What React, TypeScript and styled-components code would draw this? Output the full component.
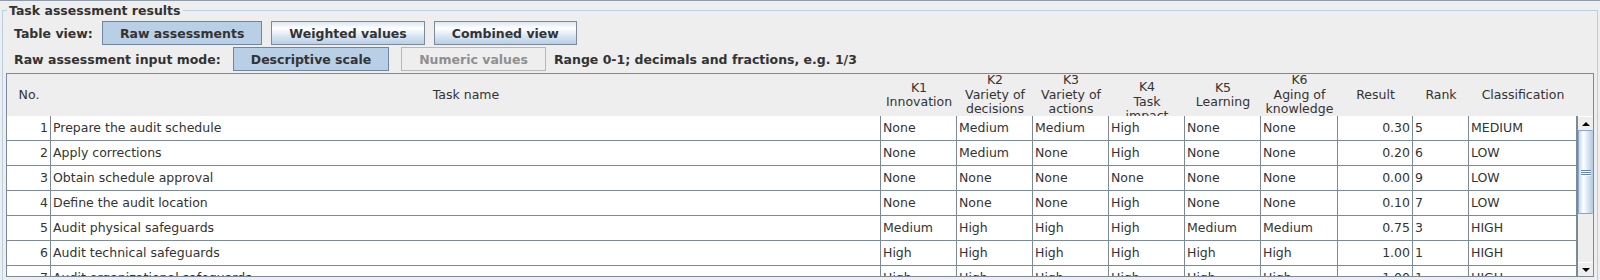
import React from "react";
import styled, { createGlobalStyle, css } from "styled-components";

const GlobalStyle = createGlobalStyle`
  html, body {
    margin: 0;
    padding: 0;
    overflow: hidden;
    background: #eeeeee;
  }
  body {
    font-family: "DejaVu Sans", "Liberation Sans", sans-serif;
    font-size: 12.5px;
    color: #333333;
  }
`;

const COLUMNS = "44px 830px 76px 76px 76px 76px 76px 77px 75px 56px 108px";
const GRID = "#7a8a99";

const Window = styled.div`
  border-top: 1px solid #8e9cab;
  height: 279px;
`;

const Panel = styled.section`
  margin: 9px 2px 0 2px;
  border: 1px solid #b8cfe5;
  padding-bottom: 20px;
`;

const PanelTitle = styled.div`
  width: fit-content;
  margin: -8px 0 0 4px;
  padding: 0 2px;
  background: #eeeeee;
  line-height: 15px;
  font-weight: bold;
`;

const Toolbar = styled.div<{ $gap: number; $top: number }>`
  display: flex;
  align-items: center;
  gap: ${(p) => p.$gap}px;
  height: 24px;
  margin-top: ${(p) => p.$top}px;
  padding-left: 11px;
`;

const Label = styled.span`
  font-weight: bold;
  white-space: nowrap;
`;

const RangeNote = styled(Label)`
  margin-left: -4px;
`;

const ToggleButton = styled.button<{ $selected?: boolean }>`
  height: 24px;
  box-sizing: border-box;
  padding: 0 17px;
  border: 1px solid ${GRID};
  font-family: inherit;
  font-size: inherit;
  font-weight: bold;
  color: #333333;
  background: linear-gradient(#dde8f3 0%, #ffffff 30%, #dde8f3 60%, #b8cfe5 100%);
  ${(p) =>
    p.$selected &&
    css`
      background: #b8cfe5;
      border-color: #6f86a3;
    `}
  &:disabled {
    background: #eeeeee;
    border-color: #b8b8b8;
    color: #8e8f91;
  }
`;

const ScrollPane = styled.div`
  margin: 2px 3px 0 3px;
  border: 1px solid ${GRID};
  height: 202px;
  display: flex;
  flex-direction: column;
  background: #ffffff;
`;

const Header = styled.div`
  display: grid;
  grid-template-columns: ${COLUMNS} 1fr;
  height: 42px;
  background: #eeeeee;
  overflow: hidden;
`;

const HeaderCell = styled.div<{ $shift?: number }>`
  display: flex;
  flex-direction: column;
  align-items: center;
  justify-content: center;
  line-height: 14.5px;
  text-align: center;
  white-space: nowrap;
  overflow: hidden;
  padding-top: ${(p) => p.$shift ?? 0}px;
`;

const Body = styled.div`
  display: flex;
  height: 160px;
`;

const Rows = styled.div`
  flex: 1;
  overflow: hidden;
`;

const Row = styled.div`
  display: grid;
  grid-template-columns: ${COLUMNS};
  height: 25px;
`;

const Cell = styled.div<{ $align?: "left" | "right" }>`
  box-sizing: border-box;
  border-right: 1px solid ${GRID};
  border-bottom: 1px solid ${GRID};
  padding: 0 ${(p) => (p.$align === "right" ? "2px" : "0")} 0
    ${(p) => (p.$align === "right" ? "0" : "2px")};
  text-align: ${(p) => p.$align ?? "left"};
  line-height: 24px;
  white-space: nowrap;
  overflow: hidden;
`;

const ScrollBar = styled.div`
  width: 15px;
  border-left: 1px solid ${GRID};
  background: #eeeeee;
  display: flex;
  flex-direction: column;
`;

const ArrowButton = styled.div<{ $down?: boolean }>`
  height: 13px;
  display: flex;
  align-items: center;
  justify-content: center;
  background: #eeeeee;
  border-top: 1px solid #ffffff;
  &::after {
    content: "";
    border-left: 4px solid transparent;
    border-right: 4px solid transparent;
    ${(p) =>
      p.$down
        ? css`
            border-top: 4px solid #000000;
          `
        : css`
            border-bottom: 4px solid #000000;
          `}
  }
`;

const Thumb = styled.div`
  height: 84px;
  box-sizing: border-box;
  border: 1px solid #8da6c8;
  border-right-color: #b8cfe5;
  background: linear-gradient(to right, #c8d9ec 0%, #ffffff 35%, #dde8f3 65%, #b8cfe5 100%);
  display: flex;
  flex-direction: column;
  align-items: center;
  justify-content: center;
  gap: 1px;
`;

const Grip = styled.span`
  width: 10px;
  height: 1px;
  background: #6382bf;
  box-shadow: 0 1px 0 #ffffff;
`;

const Track = styled.div`
  flex: 1;
`;

type Level = "None" | "Medium" | "High";

interface Task {
  name: string;
  k: Level[];
  result: string;
  rank: number;
  cls: string;
}

const headers: { lines: string[]; shift?: number }[] = [
  { lines: ["No."] },
  { lines: ["Task name"] },
  { lines: ["K1", "Innovation"] },
  { lines: ["K2", "Variety of", "decisions"] },
  { lines: ["K3", "Variety of", "actions"] },
  { lines: ["K4", "Task", "impact"], shift: 14 },
  { lines: ["K5", "Learning"] },
  { lines: ["K6", "Aging of", "knowledge"] },
  { lines: ["Result"] },
  { lines: ["Rank"] },
  { lines: ["Classification"] },
];

const tasks: Task[] = [
  { name: "Prepare the audit schedule", k: ["None", "Medium", "Medium", "High", "None", "None"], result: "0.30", rank: 5, cls: "MEDIUM" },
  { name: "Apply corrections", k: ["None", "Medium", "None", "High", "None", "None"], result: "0.20", rank: 6, cls: "LOW" },
  { name: "Obtain schedule approval", k: ["None", "None", "None", "None", "None", "None"], result: "0.00", rank: 9, cls: "LOW" },
  { name: "Define the audit location", k: ["None", "None", "None", "High", "None", "None"], result: "0.10", rank: 7, cls: "LOW" },
  { name: "Audit physical safeguards", k: ["Medium", "High", "High", "High", "Medium", "Medium"], result: "0.75", rank: 3, cls: "HIGH" },
  { name: "Audit technical safeguards", k: ["High", "High", "High", "High", "High", "High"], result: "1.00", rank: 1, cls: "HIGH" },
  { name: "Audit organizational safeguards", k: ["High", "High", "High", "High", "High", "High"], result: "1.00", rank: 1, cls: "HIGH" },
];

export default function App() {
  return (
    <>
      <GlobalStyle />
      <Window>
        <Panel>
          <PanelTitle>Task assessment results</PanelTitle>
          <Toolbar $gap={9} $top={3}>
            <Label>Table view:</Label>
            <ToggleButton $selected>Raw assessments</ToggleButton>
            <ToggleButton>Weighted values</ToggleButton>
            <ToggleButton>Combined view</ToggleButton>
          </Toolbar>
          <Toolbar $gap={12} $top={2}>
            <Label>Raw assessment input mode:</Label>
            <ToggleButton $selected>Descriptive scale</ToggleButton>
            <ToggleButton disabled>Numeric values</ToggleButton>
            <RangeNote>Range 0-1; decimals and fractions, e.g. 1/3</RangeNote>
          </Toolbar>
          <ScrollPane>
            <Header>
              {headers.map((h, i) => (
                <HeaderCell key={i} $shift={h.shift}>
                  {h.lines.map((l) => (
                    <span key={l}>{l}</span>
                  ))}
                </HeaderCell>
              ))}
              <div />
            </Header>
            <Body>
              <Rows>
                {tasks.map((t, i) => (
                  <Row key={i}>
                    <Cell $align="right">{i + 1}</Cell>
                    <Cell>{t.name}</Cell>
                    {t.k.map((v, j) => (
                      <Cell key={j}>{v}</Cell>
                    ))}
                    <Cell $align="right">{t.result}</Cell>
                    <Cell>{t.rank}</Cell>
                    <Cell>{t.cls}</Cell>
                  </Row>
                ))}
              </Rows>
              <ScrollBar>
                <ArrowButton />
                <Thumb>
                  <Grip />
                  <Grip />
                  <Grip />
                </Thumb>
                <Track />
                <ArrowButton $down />
              </ScrollBar>
            </Body>
          </ScrollPane>
        </Panel>
      </Window>
    </>
  );
}
